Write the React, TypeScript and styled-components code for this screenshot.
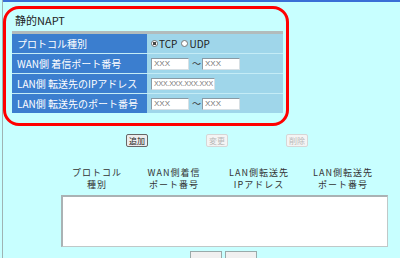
import styled, { createGlobalStyle } from 'styled-components';

const Global = createGlobalStyle`
  html, body {
    margin: 0;
    padding: 0;
    background: #c8ffff;
  }
  body {
    font-family: "Noto Sans CJK JP", "Liberation Sans", sans-serif;
  }
`;

type Row = { label: string; kind: 'radio' | 'range' | 'ip' };

const ROWS: Row[] = [
  { label: 'プロトコル種別', kind: 'radio' },
  { label: 'WAN側 着信ポート番号', kind: 'range' },
  { label: 'LAN側 転送先のIPアドレス', kind: 'ip' },
  { label: 'LAN側 転送先のポート番号', kind: 'range' },
];

const COLUMNS = [
  { w: 80, top: 'プロトコル', bottom: '種別' },
  { w: 74, top: 'WAN側着信', bottom: 'ポート番号' },
  { w: 96, top: 'LAN側転送先', bottom: 'IPアドレス' },
  { w: 72, top: 'LAN側転送先', bottom: 'ポート番号' },
];

export default function App() {
  return (
    <>
      <Global />
      <Page>
        <TopBar />
        <Highlight>
          <Title>静的NAPT</Title>
          <Rule />
          <Table>
            {ROWS.map((r) => (
              <TableRow key={r.label}>
                <LabelCell>{r.label}</LabelCell>
                <ValueCell>
                  {r.kind === 'radio' && (
                    <>
                      <Radio $on>TCP</Radio>
                      <Radio>UDP</Radio>
                    </>
                  )}
                  {r.kind === 'range' && (
                    <>
                      <Field $w={38}>XXX</Field>
                      <Tilde>〜</Tilde>
                      <Field $w={38}>XXX</Field>
                    </>
                  )}
                  {r.kind === 'ip' && <Field $w={64} $tight>XXX.XXX.XXX.XXX</Field>}
                </ValueCell>
              </TableRow>
            ))}
          </Table>
        </Highlight>

        <ButtonRow>
          <SmallButton>追加</SmallButton>
          <SmallButton $disabled>変更</SmallButton>
          <SmallButton $disabled>削除</SmallButton>
        </ButtonRow>

        <HeaderRow>
          {COLUMNS.map((c, i) => (
            <HeaderCell key={i} style={{ width: c.w }}>
              <span>{c.top}</span>
              <span>{c.bottom}</span>
            </HeaderCell>
          ))}
        </HeaderRow>

        <ListBox />

        <FooterRow>
          <FooterButton />
          <FooterButton />
        </FooterRow>
      </Page>
    </>
  );
}

const Page = styled.div`
  height: 258px;
  box-sizing: border-box;
  border-left: 1px solid #9fb3b3;
  margin-left: 2px;
  width: 398px;
  overflow: hidden;
  display: flex;
  flex-direction: column;
`;

const TopBar = styled.div`
  height: 2px;
  background: #3a6fd6;
  flex-shrink: 0;
`;

const Highlight = styled.div`
  margin: 4px 0 0 0;
  width: 286px;
  height: 120px;
  box-sizing: border-box;
  border: 3px solid #ff0000;
  border-radius: 16px;
  padding: 0 3px 0 6px;
  flex-shrink: 0;
`;

const Title = styled.div`
  height: 22px;
  display: flex;
  align-items: center;
  padding-left: 3px;
  font-size: 11px;
  color: #222;
`;

const Rule = styled.div`
  height: 3px;
  background: #b2bcbc;
`;

const Table = styled.div`
  display: flex;
  flex-direction: column;
  gap: 1px;
  background: #c4ecf6;
`;

const TableRow = styled.div`
  display: flex;
  height: 19px;
`;

const LabelCell = styled.div`
  width: 135px;
  flex-shrink: 0;
  background: #3b7ecf;
  color: #fff;
  font-size: 10px;
  display: flex;
  align-items: center;
  padding-left: 5px;
  box-sizing: border-box;
  white-space: nowrap;
`;

const ValueCell = styled.div`
  flex: 1;
  background: #9fd6ea;
  display: flex;
  align-items: center;
  padding-left: 4px;
  gap: 3px;
`;

const Radio = styled.span<{ $on?: boolean }>`
  display: inline-flex;
  align-items: center;
  gap: 1px;
  font-size: 10px;
  color: #222;
  margin-right: 1px;
  &::before {
    content: '';
    width: 7px;
    height: 7px;
    box-sizing: border-box;
    border-radius: 50%;
    border: 1px solid #777;
    background: ${({ $on }) => ($on ? 'radial-gradient(circle, #444 0 1.5px, #fff 2px)' : '#fff')};
  }
`;

const Field = styled.span<{ $w: number; $tight?: boolean }>`
  width: ${({ $w }) => $w}px;
  height: 12px;
  box-sizing: border-box;
  background: #fff;
  border: 1px solid #8a9aa4;
  border-right-color: #d8e0e4;
  border-bottom-color: #d8e0e4;
  font-family: "Liberation Sans", sans-serif;
  font-size: ${({ $tight }) => ($tight ? '7px' : '8px')};
  letter-spacing: ${({ $tight }) => ($tight ? '-0.2px' : '0')};
  color: #777;
  display: flex;
  align-items: center;
  padding-left: 2px;
  overflow: hidden;
  white-space: nowrap;
`;

const Tilde = styled.span`
  font-size: 9px;
  color: #333;
  width: 7px;
  text-align: center;
`;

const ButtonRow = styled.div`
  display: grid;
  grid-template-columns: 80px 80px 80px;
  justify-items: center;
  margin: 8px 0 0 94px;
  flex-shrink: 0;
`;

const SmallButton = styled.span<{ $disabled?: boolean }>`
  font-size: 8px;
  line-height: 9px;
  padding: 1px 2px;
  border: 1px solid ${({ $disabled }) => ($disabled ? '#d6d6d6' : '#666')};
  border-radius: 2px;
  background: ${({ $disabled }) => ($disabled ? '#f4f4f4' : '#ececec')};
  color: ${({ $disabled }) => ($disabled ? '#b8b8b8' : '#222')};
`;

const HeaderRow = styled.div`
  display: flex;
  margin: 20px 0 0 54px;
  flex-shrink: 0;
`;

const HeaderCell = styled.div`
  display: flex;
  flex-direction: column;
  align-items: center;
  font-size: 9px;
  line-height: 12px;
  letter-spacing: 1px;
  color: #333;
  white-space: nowrap;
`;

const ListBox = styled.div`
  margin: 4px 0 0 58px;
  width: 327px;
  height: 52px;
  box-sizing: border-box;
  background: #fff;
  border: 1px solid #c0c8c8;
  border-top: 2px solid #aab2b4;
  border-left: 2px solid #aab2b4;
  flex-shrink: 0;
`;

const FooterRow = styled.div`
  display: flex;
  gap: 3px;
  margin: 4px 0 0 187px;
`;

const FooterButton = styled.div`
  width: 32px;
  height: 12px;
  box-sizing: border-box;
  border: 1px solid #9aa;
  background: #f0f0f0;
`;
